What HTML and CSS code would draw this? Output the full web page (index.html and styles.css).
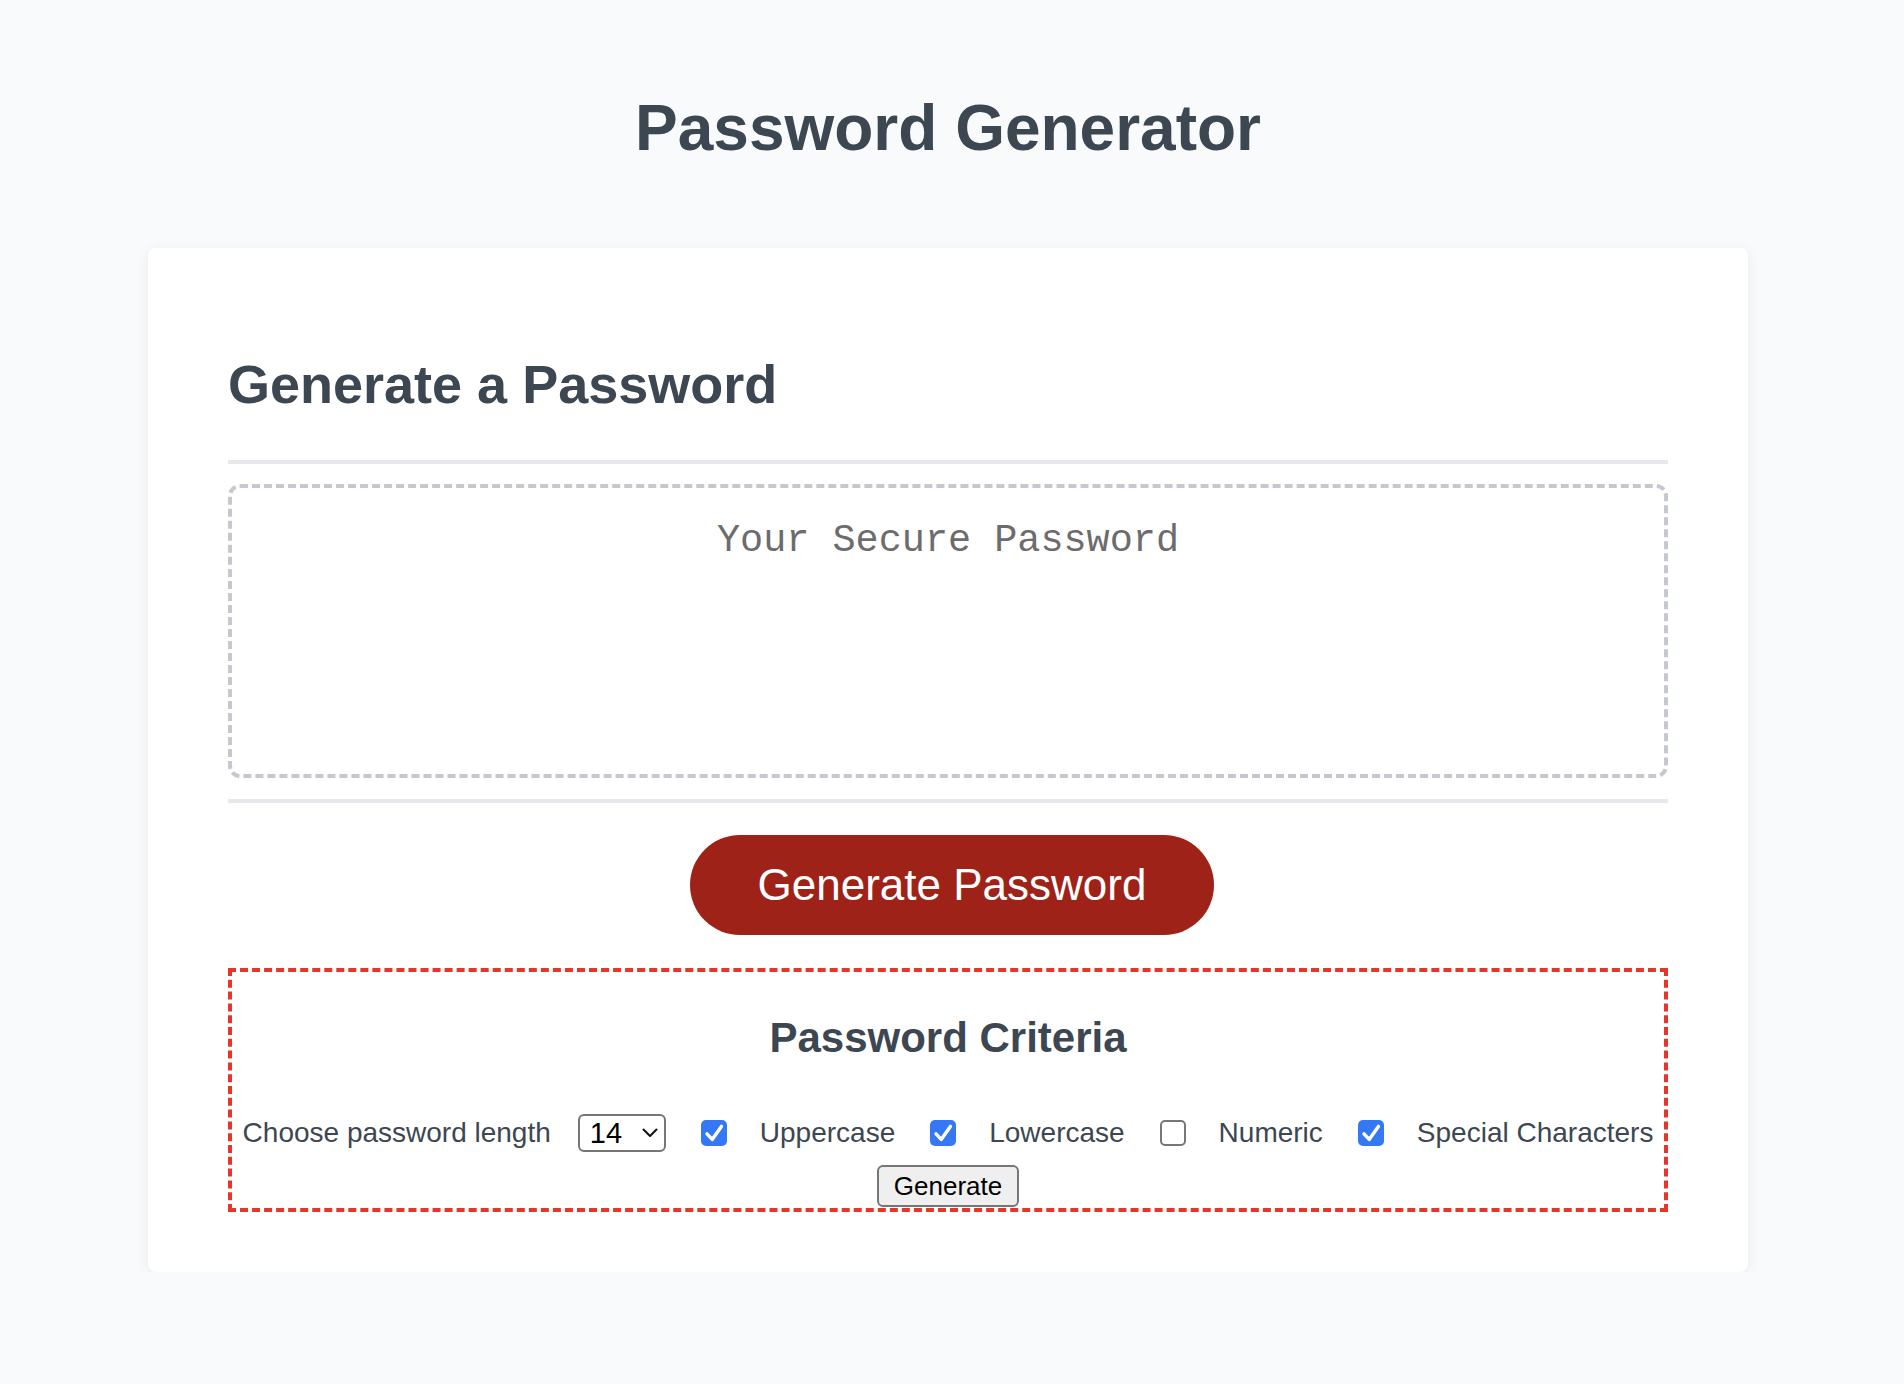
FILE: index.html
```html
<!DOCTYPE html>
<html lang="en">
<head>
<meta charset="utf-8">
<title>Password Generator</title>
<link rel="stylesheet" href="styles.css">
</head>
<body>
<main class="page">
  <h1 class="title">Password Generator</h1>
  <section class="card">
    <h2 class="card-title">Generate a Password</h2>
    <hr class="divider">
    <textarea class="password-box" placeholder="Your Secure Password" readonly></textarea>
    <hr class="divider">
    <div class="actions">
      <button class="btn-generate" type="button">Generate Password</button>
    </div>
    <div class="criteria">
      <h3 class="criteria-title">Password Criteria</h3>
      <div class="criteria-row">
        <label class="crit-label first" for="length">Choose password length</label>
        <div class="select-wrap">
          <select id="length" class="length-select">
            <option>14</option>
          </select>
          <svg class="chevron" width="16" height="10" viewBox="0 0 16 10"><polyline points="1.5,1.5 8,8 14.5,1.5" fill="none" stroke="#111" stroke-width="2" stroke-linecap="round" stroke-linejoin="round"/></svg>
        </div>
        <input type="checkbox" class="check" id="upper" checked>
        <label class="crit-label" for="upper">Uppercase</label>
        <input type="checkbox" class="check" id="lower" checked>
        <label class="crit-label" for="lower">Lowercase</label>
        <input type="checkbox" class="check" id="numeric">
        <label class="crit-label" for="numeric">Numeric</label>
        <input type="checkbox" class="check" id="special" checked>
        <label class="crit-label" for="special">Special Characters</label>
      </div>
      <div class="criteria-submit">
        <button class="btn-small" type="button">Generate</button>
      </div>
    </div>
  </section>
</main>
</body>
</html>
```

FILE: styles.css
```css
html, body {
  margin: 0;
  background: #f9fafb;
}

body {
  padding: 90px 8px 0 0;
  font-family: "Liberation Sans", Arial, Helvetica, sans-serif;
  color: #3c4752;
}

.page {
  width: 1600px;
  margin: 0 auto;
}

.title {
  margin: 0 0 82px;
  font-size: 64px;
  line-height: 76px;
  font-weight: 700;
  text-align: center;
  color: #3c4752;
}

.card {
  background: #ffffff;
  border-radius: 8px;
  box-shadow: 0 3px 14px rgba(20, 30, 50, 0.07);
  padding: 80px 80px 60px;
}

.card-title {
  margin: 25px 0 45px;
  font-size: 54px;
  line-height: 62px;
  font-weight: 700;
  color: #3c4752;
}

.divider {
  margin: 0;
  border: 0;
  height: 4px;
  background: #e6e8eb;
}

.password-box {
  display: block;
  box-sizing: border-box;
  width: 100%;
  height: 294px;
  margin: 20px 0 21px;
  padding: 31px 32px;
  border: 4px dashed #c5c9cf;
  border-radius: 12px;
  resize: none;
  outline: none;
  background: #ffffff;
  font-family: "Liberation Mono", "Courier New", monospace;
  font-size: 38.5px;
  text-align: center;
  color: #222;
}

.password-box::placeholder {
  color: #6c6c6c;
  opacity: 1;
}

.actions {
  display: flex;
  justify-content: center;
  padding-left: 8px;
  margin-top: 32px;
}

.btn-generate {
  width: 524px;
  height: 100px;
  border: 0;
  border-radius: 50px;
  background: #9f2219;
  color: #ffffff;
  font-family: "Liberation Sans", Arial, Helvetica, sans-serif;
  font-size: 44px;
  cursor: pointer;
}

.criteria {
  margin-top: 33px;
  border: 4px dashed #e8352b;
  padding: 42px 0 1px;
}

.criteria-title {
  margin: 0 0 52px;
  font-size: 42px;
  line-height: 48px;
  font-weight: 700;
  text-align: center;
  color: #3c4752;
}

.criteria-row {
  display: flex;
  justify-content: center;
  align-items: center;
  height: 38px;
}

.crit-label {
  font-size: 28px;
  line-height: 36px;
  margin-left: 33px;
  color: #3c4752;
  white-space: nowrap;
}

.crit-label.first {
  margin-left: 0;
}

.select-wrap {
  position: relative;
  margin-left: 27px;
  width: 88px;
  height: 38px;
}

.length-select {
  appearance: none;
  -webkit-appearance: none;
  box-sizing: border-box;
  width: 88px;
  height: 38px;
  margin: 0;
  padding: 0 0 0 10px;
  border: 2px solid #767676;
  border-radius: 6px;
  background: #ffffff;
  color: #000;
  font-family: "Liberation Sans", Arial, Helvetica, sans-serif;
  font-size: 29px;
}

.chevron {
  position: absolute;
  right: 8px;
  top: 14px;
  pointer-events: none;
}

.check {
  appearance: none;
  -webkit-appearance: none;
  box-sizing: border-box;
  width: 26px;
  height: 26px;
  margin: 0 0 0 35px;
  border: 2px solid #777777;
  border-radius: 5px;
  background: #ffffff;
}

.check:checked {
  border: 0;
  background-color: #3478f6;
  background-image: url("data:image/svg+xml,%3Csvg xmlns='http://www.w3.org/2000/svg' viewBox='0 0 26 26'%3E%3Cpath d='M6 13.8l5.2 5.6L20.4 6.4' fill='none' stroke='white' stroke-width='3.4' stroke-linecap='round' stroke-linejoin='round'/%3E%3C/svg%3E");
  background-size: 26px 26px;
}

.criteria-submit {
  display: flex;
  justify-content: center;
  margin-top: 13px;
}

.btn-small {
  box-sizing: border-box;
  width: 142px;
  height: 42px;
  padding: 0;
  border: 2px solid #767676;
  border-radius: 6px;
  background: #efefef;
  color: #000;
  font-family: "Liberation Sans", Arial, Helvetica, sans-serif;
  font-size: 26px;
}
```
